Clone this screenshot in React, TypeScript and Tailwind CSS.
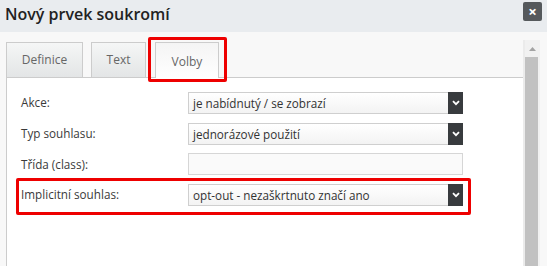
import React from 'react';

const Chevron = () => (
  <svg width="8" height="6" viewBox="0 0 8 6" fill="none">
    <path d="M1 1.2 L4 4.2 L7 1.2" stroke="#ffffff" strokeWidth="1.8" />
  </svg>
);

function SelectBox({ value }: { value: string }) {
  return (
    <div className="flex h-[22px] w-[275px] border border-[#cfcfcf] bg-gradient-to-b from-[#ffffff] to-[#f3f3f3]">
      <div className="flex-1 pl-[4px] text-[11.7px] leading-[20px] text-[#333]">{value}</div>
      <div className="flex w-[15px] items-center justify-center bg-[#383b3e] -my-px -mr-px">
        <Chevron />
      </div>
    </div>
  );
}

export default function App() {
  const rows = [
    { label: 'Akce:', value: 'je nabídnutý / se zobrazí', select: true },
    { label: 'Typ souhlasu:', value: 'jednorázové použití', select: true },
    { label: 'Třída (class):', value: '', select: false },
  ];

  return (
    <div className="h-[266px] w-[547px] overflow-hidden bg-[#f8f8f8] font-['Open_Sans',sans-serif]">
      <header className="flex h-[32px] items-start justify-between bg-[#e9ecef] pl-[5px] pr-[5px] pt-[2px]">
        <h1 className="text-[16px] font-semibold leading-[24px] text-[#222]">Nový prvek soukromí</h1>
        <button className="flex h-[19px] w-[19px] items-center justify-center rounded-[2px] bg-[#55595c] text-[15px] font-bold leading-none text-white">
          ×
        </button>
      </header>

      <div className="flex h-[234px]">
        <div className="flex w-[523px] flex-col pl-[6px] pt-[10px]">
          <div className="flex h-[35px] items-end gap-[8px]">
            <div className="flex h-[35px] w-[77px] items-center justify-center border border-b-0 border-[#cccccc] bg-gradient-to-b from-[#f5f6f6] to-[#e3e5e6] text-[12px] text-[#666]">
              Definice
            </div>
            <div className="flex h-[35px] w-[55px] items-center justify-center border border-b-0 border-[#cccccc] bg-gradient-to-b from-[#f5f6f6] to-[#e3e5e6] text-[12px] text-[#666]">
              Text
            </div>
            <div className="relative ml-[1px]">
              <div className="relative z-10 -mb-px flex h-[36px] w-[64px] items-center justify-center border border-b-0 border-[#cccccc] bg-gradient-to-b from-[#f4f4f4] to-[#ffffff] pt-[2px] text-[12px] text-[#666]">
                Volby
              </div>
              <div className="absolute -left-[7px] -right-[8px] -top-[5px] -bottom-[5px] z-20 rounded-[2px] border-[3px] border-[#ee0000]" />
            </div>
          </div>

          <div className="flex-1 border-l border-t border-[#cccccc] bg-white pl-[14px] pt-[14px]">
            <div className="flex flex-col gap-[8.7px]">
              {rows.map((r) => (
                <div key={r.label} className="flex h-[22px] items-center">
                  <div className="w-[167px] text-[11.7px] text-[#3a3a3a]">{r.label}</div>
                  {r.select ? (
                    <SelectBox value={r.value} />
                  ) : (
                    <div className="h-[22px] w-[275px] border border-[#d6d6d6] bg-[#fafafa]" />
                  )}
                </div>
              ))}
              <div className="relative flex h-[22px] items-center">
                <div className="w-[167px] text-[11.7px] text-[#3a3a3a]">Implicitní souhlas:</div>
                <SelectBox value="opt-out - nezaškrtnuto značí ano" />
                <div className="absolute -top-[6px] -bottom-[9px] left-[-5px] w-[455px] rounded-[2px] border-[3px] border-[#ee0000]" />
              </div>
            </div>
          </div>
        </div>

        <div className="mt-[8px] flex w-[17px] flex-col border-l-2 border-[#ebebeb] bg-[#f1f1f1]">
          <div className="flex h-[17px] items-center justify-center">
            <svg width="7" height="4" viewBox="0 0 7 4">
              <path d="M0 4 L3.5 0 L7 4 Z" fill="#a3a3a3" />
            </svg>
          </div>
          <div className="flex-1 w-[13px] bg-[#c1c1c1]" />
        </div>
      </div>
    </div>
  );
}
